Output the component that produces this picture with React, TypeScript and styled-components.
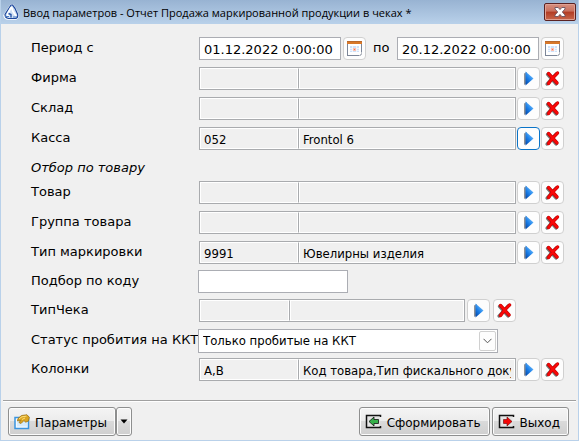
import React, { useState } from 'react';
import styled, { createGlobalStyle } from 'styled-components';

const GlobalStyle = createGlobalStyle`
  *, *::before, *::after { box-sizing: border-box; }
  body { margin: 0; background: #f0f0f0; }
  button, input, select { margin: 0; font: inherit; color: inherit; }
`;

const Window = styled.div`
  display: flex;
  flex-direction: column;
  min-height: 100vh;
  border: 1px solid #b9d1ea;
  border-top: 0;
  background: #f0f0f0;
  color: #000;
  font: 13px/16px 'DejaVu Sans', Verdana, sans-serif;
`;

const TitleBar = styled.header`
  display: flex;
  align-items: center;
  gap: 4px;
  height: 24px;
  padding: 0 2px;
  background: linear-gradient(#98b3d2, #b9d1ea);
`;

const Title = styled.h1`
  flex: 1;
  min-width: 0;
  margin: 0;
  padding-top: 2px;
  overflow: hidden;
  white-space: nowrap;
  font: 11px/16px 'Open Sans', 'Segoe UI', sans-serif;
`;

const CloseButton = styled.button`
  display: flex;
  align-items: center;
  justify-content: center;
  width: 32px;
  height: 18px;
  padding: 0;
  border: 1px solid #5a2222;
  border-radius: 2px;
  box-shadow: inset 0 0 0 1px #e0a193;
  background: linear-gradient(#d79080 0%, #c9705d 45%, #b23c24 50%, #c8674c 100%);
`;

const Form = styled.form`
  display: flex;
  flex: 1;
  flex-direction: column;
`;

const Fields = styled.div`
  display: flex;
  flex-direction: column;
  padding: 13px 14px 0 30px;
`;

const Row = styled.div<{ $tight?: boolean }>`
  display: flex;
  align-items: center;
  height: 23px;
  margin-bottom: ${(p) => (p.$tight ? 6 : 7)}px;
`;

const Label = styled.label`
  flex: none;
  width: 167px;
  padding-bottom: 1px;
  white-space: nowrap;
`;

const Controls = styled.div<{ $inset?: boolean }>`
  display: flex;
  flex: 1;
  align-items: center;
  min-width: 0;
  padding-left: ${(p) => (p.$inset ? 1 : 0)}px;
`;

const SectionHeading = styled.h2`
  height: 24px;
  margin: 0;
  padding-top: 3px;
  font-size: 13px;
  font-weight: normal;
  font-style: italic;
  line-height: 16px;
`;

const DateInput = styled.input`
  flex: 1;
  width: 0;
  min-width: 0;
  height: 23px;
  padding: 2px 4px 0;
  border: 1px solid #abadb3;
  background: #fff;
`;

const Until = styled.label`
  flex: none;
  width: 31px;
  padding: 0 0 1px 7px;
`;

const TextInput = styled.input`
  width: 150px;
  height: 23px;
  padding: 0 5px;
  border: 1px solid #abadb3;
  background: #fff;
`;

const Pair = styled.div<{ $short?: boolean }>`
  display: flex;
  flex: 1;
  min-width: 0;
  max-width: ${(p) => (p.$short ? '266px' : 'none')};
  height: 23px;
  border: 1px solid #a9abae;
`;

const Cell = styled.input<{ $width?: number }>`
  flex: ${(p) => (p.$width ? 'none' : '1')};
  width: ${(p) => p.$width ?? 0}px;
  min-width: 0;
  height: 21px;
  padding: 1px 3px 0;
  border: 1px solid #fff;
  background: #f0f0f0;
  font: 13px/16px 'DejaVu Sans Condensed', Tahoma, sans-serif;

  & + & {
    padding-left: 4px;
    border-left: 1px solid #a9abae;
    box-shadow: inset 1px 0 #fff;
  }
`;

const Tools = styled.div<{ $wide?: boolean }>`
  display: flex;
  flex: none;
  gap: ${(p) => (p.$wide ? 3 : 1)}px;
  margin-left: ${(p) => (p.$wide ? 2 : 1)}px;
`;

const ToolButton = styled.button<{ $active?: boolean }>`
  display: flex;
  flex: none;
  align-items: center;
  justify-content: center;
  width: 23px;
  height: 23px;
  padding: 0;
  border: 1px solid ${(p) => (p.$active ? '#0a74c8' : '#d0d0d0')};
  border-radius: 4px;
  background: #fdfdfd;
`;

const DateTools = styled.div`
  display: flex;
  flex: none;
  margin-left: 2px;
`;

const SelectBox = styled.div`
  display: flex;
  align-items: center;
  width: 300px;
  height: 24px;
  padding: 1px;
  border: 1px solid #abadb3;
  background: #fff;
`;

const Select = styled.select`
  flex: 1;
  min-width: 0;
  height: 22px;
  margin-right: -17px;
  padding: 0 17px 0 3px;
  border: 0;
  appearance: none;
  background: transparent;
  font: 13px/20px 'DejaVu Sans Condensed', Tahoma, sans-serif;
`;

const DropMark = styled.span`
  display: flex;
  align-items: center;
  justify-content: center;
  width: 17px;
  height: 20px;
  border: 1px solid #d0d0d0;
  border-radius: 2px;
  background: #fdfdfd;
  pointer-events: none;
`;

const Footer = styled.footer`
  display: flex;
  justify-content: space-between;
  margin: auto 2px 0;
  padding: 6px 7px 4px 5px;
  border-top: 1px solid #a0a0a0;
  box-shadow: inset 0 1px #fff;
`;

const ButtonGroup = styled.div<{ $gap?: number }>`
  display: flex;
  gap: ${(p) => p.$gap ?? 0}px;
`;

const PushButton = styled.button<{ $narrow?: boolean }>`
  display: flex;
  align-items: center;
  justify-content: ${(p) => (p.$narrow ? 'center' : 'flex-start')};
  gap: 5px;
  width: ${(p) => (p.$narrow ? '16px' : 'auto')};
  height: 29px;
  padding: ${(p) => (p.$narrow ? '0' : '0 8px 0 5px')};
  border: 1px solid #8e8f8f;
  border-radius: 3px;
  box-shadow: inset 0 0 0 1px #fcfcfc;
  background: linear-gradient(#f4f4f4 0%, #ececec 49%, #dadada 50%, #cfcfcf 100%);
  font-size: 12px;
  white-space: nowrap;

  & > span { padding-top: 2px; }
`;

const AppLogo = () => (
  <svg width="16" height="16" viewBox="0 0 16 16" aria-hidden="true">
    <path d="M8 .8 1 11.5Q1.500 15 5 15h8q2.500-1 2-4Q13 5 10 1.200Z" fill="#fff" stroke="#fff" strokeWidth="1.500" />
    <path d="M8 1 2 10.500Q2 14 5.500 14.500H13Q15.500 13 14.500 10 12.500 4 9.500 1Z" fill="#cfe0f4" stroke="#1d479c" strokeWidth="1.200" />
    <path d="M8 3.500 5 9Q4 11.500 6 12.500M8.500 3 10 7.500 13 12" fill="none" stroke="#fff" strokeWidth="1.700" />
    <path d="M5.500 9.500 8 10.500v3" fill="none" stroke="#2855a8" strokeWidth="1.400" />
    <path d="M2 12.500h4M10 13h4" stroke="#4d7bc0" />
  </svg>
);

const CloseGlyph = () => (
  <svg width="12" height="10" viewBox="0 0 12 10" aria-hidden="true">
    <path d="M1 .5h3.200L6 2.600 7.800.5H11V2L8.300 5 11 8v1.500H7.800L6 7.400 4.200 9.500H1V8l2.700-3L1 2Z" fill="#fff" stroke="#6a5360" strokeWidth=".9" />
  </svg>
);

const CalendarIcon = () => (
  <svg width="17" height="17" viewBox="0 0 17 17" shapeRendering="crispEdges" aria-hidden="true">
    <path d="M1 2h15v13H1Z" fill="#fff" />
    <path d="M1.500 4v11.500h11M15.500 4v8" fill="none" stroke="#7c8698" />
    <path d="M13 15.500h1.500V14h1v-2" fill="none" stroke="#b8bcc4" />
    <path d="M1 1h15v3H1Z" fill="#d87829" />
    <path d="M1 1h15v1H1Z" fill="#b9682c" />
    <path d="M4 6h9v6H4Z" fill="#cfe2fa" />
    <path d="M4 8.500h9M4 10.500h9M6.500 6v6M10.500 6v6" stroke="#eef6ff" />
    <path d="M7 8h3v3H7Z" fill="#ffc0ae" />
    <path d="M8 9h1v1H8Z" fill="#f0705c" />
  </svg>
);

const ArrowIcon = () => (
  <svg width="13" height="17" viewBox="0 0 13 17" aria-hidden="true">
    <defs>
      <linearGradient id="arrowFill" x1="0" y1="1" x2=".7" y2="0">
        <stop offset="0" stopColor="#003f9e" />
        <stop offset=".5" stopColor="#1b80ea" />
        <stop offset="1" stopColor="#7cc6ff" />
      </linearGradient>
    </defs>
    <path d="M2 3.500v11.500l3-2V2Z" fill="#8d9096" />
    <path d="M3.500 1.500v14L11.500 8.500Z" fill="url(#arrowFill)" />
  </svg>
);

const CrossIcon = () => (
  <svg width="17" height="17" viewBox="0 0 17 17" aria-hidden="true">
    <path d="M3.500 4.500 12 14M12 4 3 14" fill="none" stroke="#747474" strokeWidth="3.200" strokeLinecap="round" />
    <path d="M4.500 3.500 13 13M13.500 3Q9 7 4.500 13.500" fill="none" stroke="#c90000" strokeWidth="3.400" strokeLinecap="round" />
    <path d="M4.500 3.500 13 13M13.500 3Q9 7 4.500 13.500" fill="none" stroke="#f80808" strokeWidth="2.200" strokeLinecap="round" />
  </svg>
);

const ChevronIcon = () => (
  <svg width="9" height="6" viewBox="0 0 9 6" aria-hidden="true">
    <path d="m.5.800 4 4 4-4" fill="none" stroke="#555" />
  </svg>
);

const CaretIcon = () => (
  <svg width="8" height="5" viewBox="0 0 8 5" aria-hidden="true">
    <path d="M.5.5h7L4 4.500Z" fill="#000" />
  </svg>
);

const ParamsIcon = () => (
  <svg width="16" height="16" viewBox="0 0 16 16" aria-hidden="true">
    <path d="M1 3.500h13.500v11H1Z" fill="#f4faff" stroke="#3994df" strokeWidth="1.500" />
    <path d="M3 5.500h10v7H3Z" fill="#d5ebfc" />
    <path d="M3.500 7 4 4.500 7.500 1.500 13 .8l2.300 2.500-.8 3.700-3 1.200-1.500-1.700L7 9.500 5 8.500l1.800-2.200Z" fill="#dba623" stroke="#9f7414" strokeWidth=".8" />
    <path d="m5 4.800 3-2 4.500-.7M8 5.500l3-1.500" fill="none" stroke="#ffe07a" />
  </svg>
);

const RunIcon = () => (
  <svg width="17" height="15" viewBox="0 0 17 15" aria-hidden="true">
    <path d="M1.500 1.500h13v12h-13Z" fill="#e4e4e4" />
    <path d="M15.500 3V1.500h-14v12h14V12" fill="none" stroke="#111" strokeWidth="1.500" />
    <path d="M4 7.500 9 3v2.500h4.500v4H9V12Z" fill="#35b04a" stroke="#111" strokeWidth=".8" />
  </svg>
);

const ExitIcon = () => (
  <svg width="17" height="15" viewBox="0 0 17 15" aria-hidden="true">
    <path d="M1.500 1.500h13v12h-13Z" fill="#e4e4e4" />
    <path d="M15.500 3V1.500h-14v12h14V12" fill="none" stroke="#111" strokeWidth="1.500" />
    <path d="M14 7.500 9 3v2.500H5.500v4H9V12Z" fill="#f40606" stroke="#6a0000" strokeWidth=".6" />
  </svg>
);

interface LookupProps {
  id: string;
  label: string;
  code?: string;
  name?: string;
  active?: boolean;
  short?: boolean;
  tight?: boolean;
}

const LookupRow = ({ id, label, code = '', name = '', active, short, tight }: LookupProps) => {
  const [value, setValue] = useState({ code, name });
  return (
    <Row $tight={tight}>
      <Label htmlFor={id}>{label}</Label>
      <Controls $inset>
        <Pair $short={short}>
          <Cell id={id} $width={short ? 89 : 98} value={value.code} readOnly />
          <Cell aria-label={`${label}: наименование`} value={value.name} readOnly />
        </Pair>
        <Tools $wide={short}>
          <ToolButton type="button" $active={active} aria-label={`${label}: выбрать`}>
            <ArrowIcon />
          </ToolButton>
          <ToolButton type="button" aria-label={`${label}: очистить`} onClick={() => setValue({ code: '', name: '' })}>
            <CrossIcon />
          </ToolButton>
        </Tools>
      </Controls>
    </Row>
  );
};

export default function App() {
  return (
    <Window>
      <GlobalStyle />
      <TitleBar>
        <AppLogo />
        <Title>Ввод параметров - Отчет Продажа маркированной продукции в чеках *</Title>
        <CloseButton type="button" aria-label="Закрыть">
          <CloseGlyph />
        </CloseButton>
      </TitleBar>
      <Form onSubmit={(e) => e.preventDefault()}>
        <Fields>
          <Row>
            <Label htmlFor="from">Период с</Label>
            <Controls $inset>
              <DateInput id="from" defaultValue="01.12.2022 0:00:00" />
              <DateTools>
                <ToolButton type="button" aria-label="Начало периода">
                  <CalendarIcon />
                </ToolButton>
              </DateTools>
              <Until htmlFor="to">по</Until>
              <DateInput id="to" defaultValue="20.12.2022 0:00:00" />
              <DateTools>
                <ToolButton type="button" aria-label="Конец периода">
                  <CalendarIcon />
                </ToolButton>
              </DateTools>
            </Controls>
          </Row>
          <LookupRow id="firm" label="Фирма" />
          <LookupRow id="store" label="Склад" />
          <LookupRow id="till" label="Касса" code="052" name="Frontol 6" active />
          <SectionHeading>Отбор по товару</SectionHeading>
          <LookupRow id="goods" label="Товар" />
          <LookupRow id="group" label="Группа товара" />
          <LookupRow id="marking" label="Тип маркировки" code="9991" name="Ювелирны изделия" tight />
          <Row $tight>
            <Label htmlFor="pick">Подбор по коду</Label>
            <Controls>
              <TextInput id="pick" />
            </Controls>
          </Row>
          <LookupRow id="receipt" label="ТипЧека" short />
          <Row $tight>
            <Label htmlFor="status">Статус пробития на ККТ</Label>
            <Controls>
              <SelectBox>
                <Select id="status" defaultValue="done">
                  <option value="done">Только пробитые на ККТ</option>
                </Select>
                <DropMark>
                  <ChevronIcon />
                </DropMark>
              </SelectBox>
            </Controls>
          </Row>
          <LookupRow id="columns" label="Колонки" code="A,B" name="Код товара,Тип фискального документа" />
        </Fields>
        <Footer>
          <ButtonGroup>
            <PushButton type="button">
              <ParamsIcon />
              <span>Параметры</span>
            </PushButton>
            <PushButton type="button" $narrow aria-label="Меню параметров">
              <CaretIcon />
            </PushButton>
          </ButtonGroup>
          <ButtonGroup $gap={2}>
            <PushButton type="submit">
              <RunIcon />
              <span>Сформировать</span>
            </PushButton>
            <PushButton type="button">
              <ExitIcon />
              <span>Выход</span>
            </PushButton>
          </ButtonGroup>
        </Footer>
      </Form>
    </Window>
  );
}
